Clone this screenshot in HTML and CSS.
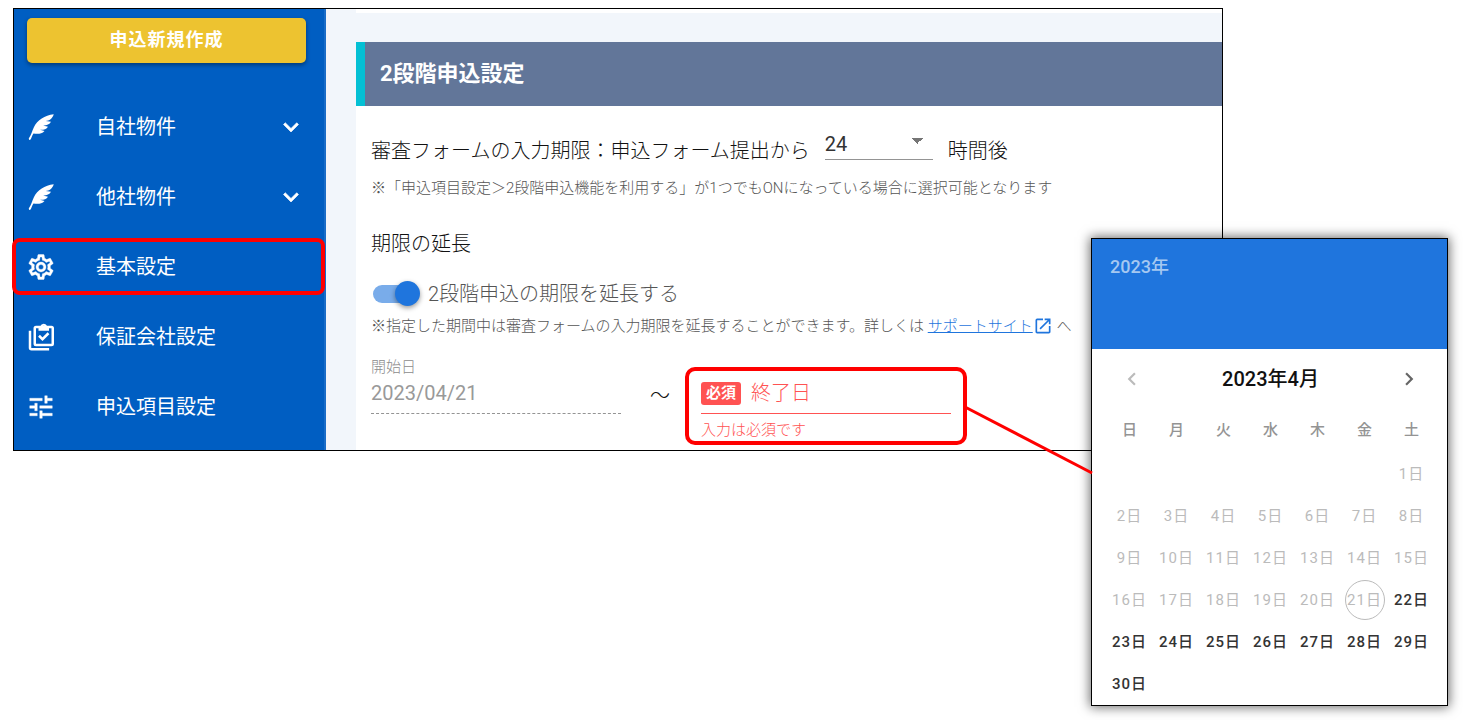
FILE: index.html
```html
<!DOCTYPE html>
<html lang="ja">
<head>
    <meta charset="UTF-8">
    <meta name="viewport" content="width=device-width, initial-scale=1.0">
    <title>基本設定</title>
    <link rel="stylesheet" href="styles.css">
</head>
<body>
    <div class="app">
        <aside class="sidebar">
            <button type="button" class="create-button">申込新規作成</button>
            <nav class="menu">
                <a href="#own" class="menu-item">
                    <svg class="icon" viewBox="0 0 24 24"><path d="M22.2 1.7C15 2.6 9 6.4 6.4 12C4.8 15.4 4.2 18.4 2.2 21.2L2.5 22.3L3.7 22C4.6 20.4 4.8 18.6 6 17.2C8.6 17.4 12.4 18 14.8 15.2L11.2 14.2C13.6 14.4 16.4 13.8 17.6 11.7L13.6 10.8C16.2 11 18.8 10 20 7.8L15.8 7.1C18.6 7 21.2 5 22.2 1.7Z"/></svg>
                    <span>自社物件</span>
                    <svg class="icon chevron" viewBox="0 0 24 24"><path d="M7.41 8.58L12 13.17L16.59 8.58L18 10L12 16L6 10Z"/></svg>
                </a>
                <a href="#other" class="menu-item">
                    <svg class="icon" viewBox="0 0 24 24"><path d="M22.2 1.7C15 2.6 9 6.4 6.4 12C4.8 15.4 4.2 18.4 2.2 21.2L2.5 22.3L3.7 22C4.6 20.4 4.8 18.6 6 17.2C8.6 17.4 12.4 18 14.8 15.2L11.2 14.2C13.6 14.4 16.4 13.8 17.6 11.7L13.6 10.8C16.2 11 18.8 10 20 7.8L15.8 7.1C18.6 7 21.2 5 22.2 1.7Z"/></svg>
                    <span>他社物件</span>
                    <svg class="icon chevron" viewBox="0 0 24 24"><path d="M7.41 8.58L12 13.17L16.59 8.58L18 10L12 16L6 10Z"/></svg>
                </a>
                <a href="#basic" class="menu-item marked">
                    <svg class="icon bold-icon" viewBox="0 0 24 24"><path d="M12,8A4,4 0 0,1 16,12A4,4 0 0,1 12,16A4,4 0 0,1 8,12A4,4 0 0,1 12,8M12,10A2,2 0 0,0 10,12A2,2 0 0,0 12,14A2,2 0 0,0 14,12A2,2 0 0,0 12,10M10,22C9.75,22 9.54,21.82 9.5,21.58L9.13,18.93C8.5,18.68 7.96,18.34 7.44,17.94L4.95,18.95C4.73,19.03 4.46,18.95 4.34,18.73L2.34,15.27C2.21,15.05 2.27,14.78 2.46,14.63L4.57,12.97L4.5,12L4.57,11L2.46,9.37C2.27,9.22 2.21,8.95 2.34,8.73L4.34,5.27C4.46,5.05 4.73,4.96 4.95,5.05L7.44,6.05C7.96,5.66 8.5,5.32 9.13,5.07L9.5,2.42C9.54,2.18 9.75,2 10,2H14C14.25,2 14.46,2.18 14.5,2.42L14.87,5.07C15.5,5.32 16.04,5.66 16.56,6.05L19.05,5.05C19.27,4.96 19.54,5.05 19.66,5.27L21.66,8.73C21.79,8.95 21.73,9.22 21.54,9.37L19.43,11L19.5,12L19.43,13L21.54,14.63C21.73,14.78 21.79,15.05 21.66,15.27L19.66,18.73C19.54,18.95 19.27,19.04 19.05,18.95L16.56,17.95C16.04,18.34 15.5,18.68 14.87,18.93L14.5,21.58C14.46,21.82 14.25,22 14,22H10M11.25,4L10.88,6.61C9.68,6.86 8.62,7.5 7.85,8.39L5.44,7.35L4.69,8.65L6.8,10.2C6.4,11.37 6.4,12.64 6.8,13.8L4.68,15.36L5.43,16.66L7.86,15.62C8.63,16.5 9.68,17.14 10.87,17.38L11.24,20H12.76L13.13,17.39C14.32,17.14 15.37,16.5 16.14,15.62L18.57,16.66L19.32,15.36L17.2,13.81C17.6,12.64 17.6,11.37 17.2,10.2L19.31,8.65L18.56,7.35L16.15,8.39C15.38,7.5 14.32,6.86 13.12,6.62L12.75,4H11.25Z"/></svg>
                    <span>基本設定</span>
                </a>
                <a href="#guarantor" class="menu-item">
                    <svg class="icon line-icon" viewBox="0 0 24 24">
                        <path d="M3.2 7V20.6Q3.2 21.8 4.4 21.8H18.5"/>
                        <rect x="7" y="4" width="14.4" height="14.4" rx="1"/>
                        <path d="M10.4 11L13.2 13.8L18 9"/>
                        <path class="solid" fill-rule="evenodd" d="M10 7V3.4H11.5A2.8 2.8 0 0 1 16.9 3.4H18.4V7ZM14.2 2.9A.9 .9 0 0 0 14.2 4.7A.9 .9 0 0 0 14.2 2.9Z"/>
                    </svg>
                    <span>保証会社設定</span>
                </a>
                <a href="#items" class="menu-item">
                    <svg class="icon bold-icon" viewBox="0 0 24 24"><path d="M3 17v2h6v-2H3zM3 5v2h10V5H3zm10 16v-2h8v-2h-8v-2h-2v6h2zM7 9v2H3v2h4v2h2V9H7zm14 4v-2H11v2h10zm-6-4h2V7h4V5h-4V3h-2v6z"/></svg>
                    <span>申込項目設定</span>
                </a>
            </nav>
        </aside>

        <main class="content">
            <div class="previous-card"></div>
            <section class="card">
                <h2>2段階申込設定</h2>
                <div class="card-body">
                    <div class="limit-row">
                        <label for="hours">審査フォームの入力期限：申込フォーム提出から</label>
                        <select id="hours">
                            <option>24</option>
                            <option>48</option>
                            <option>72</option>
                        </select>
                        <span>時間後</span>
                    </div>
                    <p class="note">※「申込項目設定＞2段階申込機能を利用する」が1つでもONになっている場合に選択可能となります</p>

                    <h3>期限の延長</h3>
                    <label class="switch">
                        <input type="checkbox" checked>
                        <span>2段階申込の期限を延長する</span>
                    </label>
                    <p class="note extend-note">※指定した期間中は審査フォームの入力期限を延長することができます。詳しくは <a href="#support">サポートサイト<svg viewBox="0 0 24 24"><path d="M19 19H5V5h7V3H5a2 2 0 0 0-2 2v14c0 1.1.89 2 2 2h14c1.1 0 2-.9 2-2v-7h-2v7zM14 3v2h3.59l-9.83 9.83 1.41 1.41L19 6.41V10h2V3h-7z"/></svg></a> へ</p>

                    <div class="period">
                        <div class="start-field">
                            <label for="start">開始日</label>
                            <input type="text" id="start" value="2023/04/21" disabled>
                        </div>
                        <span class="tilde">～</span>
                        <div class="end-field">
                            <div class="end-input">
                                <label for="end" class="required">必須</label>
                                <input type="text" id="end" placeholder="終了日">
                            </div>
                            <p class="error">入力は必須です</p>
                        </div>
                    </div>
                </div>
            </section>
        </main>
    </div>

    <div class="calendar">
        <svg class="connector" viewBox="0 0 127 68"><path d="M0 1L127 67"/></svg>
        <div class="calendar-head">2023年</div>
        <div class="calendar-nav">
            <button type="button" aria-label="前の月" disabled><svg viewBox="0 0 24 24"><path d="M15.41 16.58L10.83 12L15.41 7.41L14 6L8 12L14 18Z"/></svg></button>
            <strong>2023年4月</strong>
            <button type="button" aria-label="次の月"><svg viewBox="0 0 24 24"><path d="M8.59 16.58L13.17 12L8.59 7.41L10 6L16 12L10 18Z"/></svg></button>
        </div>
        <table>
            <thead>
                <tr><th>日</th><th>月</th><th>火</th><th>水</th><th>木</th><th>金</th><th>土</th></tr>
            </thead>
            <tbody id="days"></tbody>
        </table>
    </div>

    <script>
        // April 2023 starts on a Saturday, days up to the 21st can't be picked
        const offset = 6;
        const today = 21;
        const days = document.getElementById('days');

        for (let week = 0; week < 6; week++) {
            const row = days.insertRow();
            for (let d = 0; d < 7; d++) {
                const cell = row.insertCell();
                const day = week * 7 + d - offset + 1;
                if (day < 1 || day > 30) continue;
                const button = document.createElement('button');
                button.type = 'button';
                button.textContent = day + '日';
                button.disabled = day <= today;
                if (day === today) button.className = 'today';
                cell.appendChild(button);
            }
        }
    </script>
</body>
</html>
```
FILE: styles.css
```css
* {
    box-sizing: border-box;
}
body {
    position: relative;
    display: flow-root;
    min-height: 100vh;
    margin: 0;
    background: white;
    color: #111;
    font-family: Roboto, "Noto Sans CJK JP", sans-serif;
    font-size: 20px;
    font-weight: 300;
    line-height: 30px;
}
h2, h3, p {
    margin: 0;
}
button, input, select {
    font: inherit;
    color: inherit;
    border: 0;
    padding: 0;
    background: none;
}
svg {
    fill: currentColor;
}
.app {
    display: flex;
    margin: 8px 240px 0 13px;
    border: 1px solid black;
}

/* Sidebar */
.sidebar {
    flex: 0 0 312px;
    padding: 9px 0 8px;
    background: #005ec2;
    border-right: 2px solid #1a6dc8;
    color: white;
}
.create-button {
    display: block;
    width: 279px;
    height: 45px;
    margin: 0 13px 29px;
    padding-bottom: 2px;
    border-radius: 5px;
    background: #edc330;
    box-shadow: 0 2px 4px rgba(0, 0, 0, 0.4);
    font-size: 18px;
    font-weight: 700;
    letter-spacing: 1px;
}
.menu-item {
    position: relative;
    display: flex;
    align-items: center;
    height: 70px;
    padding: 0 18px 0 12px;
    color: white;
    font-weight: 400;
    text-decoration: none;
}
.menu-item .icon {
    width: 30px;
    height: 30px;
    margin-right: 40px;
}
.menu-item .chevron {
    margin: 0 0 0 auto;
    stroke: currentColor;
    stroke-width: 0.5;
}
.bold-icon {
    stroke: currentColor;
    stroke-width: 0.3;
}
.line-icon {
    fill: none;
    stroke: currentColor;
    stroke-width: 2;
}
.line-icon .solid {
    fill: currentColor;
    stroke: none;
}
.marked::after {
    content: "";
    position: absolute;
    inset: 6px -1px 7px -2px;
    border: 4px solid #f00;
    border-radius: 8px;
}

/* Settings */
.content {
    flex: 1;
    min-width: 0;
    padding-left: 30px;
    background: #f2f6fb;
}
.previous-card {
    height: 4px;
    margin-bottom: 29px;
    background: white;
}
.card {
    background: white;
}
.card h2 {
    padding: 16px 15px;
    border-left: 9px solid #04c0d4;
    background: #627699;
    color: white;
    font-size: 22px;
    font-weight: 700;
    line-height: 32px;
}
.card-body {
    padding: 23px 15px 5px;
    white-space: nowrap;
}
.limit-row {
    display: flex;
    gap: 15px;
    margin-bottom: 11px;
}
.limit-row label,
.limit-row span {
    padding-top: 7px;
}
.limit-row select {
    appearance: none;
    width: 108px;
    height: 31px;
    border-bottom: 1px solid #949494;
    background: conic-gradient(from -45deg at 50% 100%, #757575 90deg, transparent 0) no-repeat 86px 9px / 12px 6px;
    color: #333;
    font-weight: 400;
}
.note {
    color: #555;
    font-size: 15px;
    line-height: 22px;
}
.note a {
    color: #1f75dd;
}
.note a svg {
    width: 20px;
    height: 20px;
    vertical-align: -5px;
}
.card h3 {
    margin: 30px 0 20px;
    font-size: 20px;
    font-weight: 300;
}
.switch {
    display: flex;
    align-items: center;
    gap: 12px;
    height: 30px;
    color: #555;
}
.switch input {
    appearance: none;
    position: relative;
    width: 43px;
    height: 18px;
    margin: 0 0 0 2px;
    border-radius: 9px;
    background: #79acea;
}
.switch input::after {
    content: "";
    position: absolute;
    top: -4px;
    right: -4px;
    width: 25px;
    height: 25px;
    border-radius: 50%;
    background: #1f75dd;
    box-shadow: 0 2px 5px rgba(0, 0, 0, 0.4);
}
.extend-note {
    margin: 6px 0 19px;
}
.period {
    display: flex;
}
.start-field {
    width: 250px;
    color: #8c8c8c;
}
.start-field label {
    display: block;
    font-size: 15px;
    line-height: 22px;
}
.start-field input {
    display: block;
    width: 100%;
    height: 36px;
    padding-bottom: 5px;
    border-bottom: 1px dashed #949494;
    color: #999;
    font-weight: 400;
}
.tilde {
    margin: 25px 15px 0 29px;
}
.end-field {
    width: 282px;
    margin-top: 11px;
    padding: 7px 12px 0;
    border: 4px solid #f00;
    border-radius: 10px;
    color: #ff5252;
}
.end-input {
    display: flex;
    align-items: center;
    gap: 10px;
    height: 36px;
    padding-bottom: 5px;
    border-bottom: 1px solid #ff5252;
}
.required {
    padding: 0 5px;
    border-radius: 3px;
    background: #ff5252;
    color: white;
    font-size: 15px;
    font-weight: 700;
    line-height: 23px;
}
.end-input input {
    flex: 1;
    min-width: 0;
}
.end-input input::placeholder {
    color: #ff5252;
}
.error {
    margin-top: 5px;
    font-size: 15px;
    line-height: 22px;
}

/* Date picker */
.calendar {
    position: absolute;
    top: 238px;
    right: 15px;
    width: 357px;
    border: 1px solid black;
    background: white;
    box-shadow: 0 0 11px 1px rgba(0, 0, 0, 0.6);
}
.connector {
    position: absolute;
    top: 167px;
    right: 355px;
    width: 127px;
    height: 68px;
    overflow: visible;
    stroke: #f00;
    stroke-width: 3;
}
.calendar-head {
    height: 110px;
    padding: 13px 18px;
    background: #1f75dd;
    color: #a5c8f1;
    font-size: 18px;
    font-weight: 500;
}
.calendar-nav {
    display: flex;
    align-items: center;
    justify-content: space-between;
    height: 58px;
    padding: 2px 25px 0 27px;
}
.calendar-nav strong {
    font-weight: 500;
}
.calendar-nav button {
    display: flex;
    color: #666;
}
.calendar-nav button:disabled {
    color: #bbb;
}
.calendar-nav svg {
    width: 26px;
    height: 26px;
}
.calendar table {
    width: 329px;
    margin: 0 12px 0 14px;
    border-collapse: collapse;
    table-layout: fixed;
    font-size: 15px;
}
.calendar th {
    height: 46px;
    padding: 0;
    color: #949494;
    font-weight: 500;
}
.calendar td {
    height: 42px;
    padding: 0;
    text-align: center;
}
.calendar td button {
    width: 40px;
    height: 40px;
    margin: 0 3px;
    border-radius: 50%;
    color: #333;
    font-weight: 500;
    letter-spacing: 1px;
    line-height: 40px;
    vertical-align: top;
}
.calendar td button:disabled {
    color: #bbb;
    font-weight: 400;
}
.calendar td .today {
    border: 1px solid #bbb;
    line-height: 38px;
}
```
